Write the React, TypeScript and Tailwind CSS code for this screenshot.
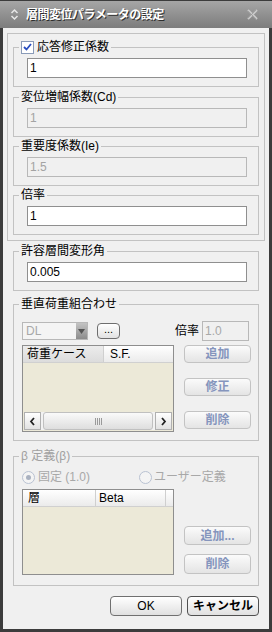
import React from "react";

function TextBox({ value, disabled }: { value: string; disabled?: boolean }) {
  return (
    <div
      className={
        disabled
          ? "mt-[10px] ml-[13px] h-[20px] w-[220px] border border-[#b8b8b8] bg-[#f0f0f0] pl-[2px] text-[12px] leading-[18px] text-[#a3a3a3]"
          : "mt-[10px] ml-[13px] h-[20px] w-[220px] border border-[#8f8f8f] bg-white pl-[2px] text-[12px] leading-[18px] text-black"
      }
    >
      {value}
    </div>
  );
}

function Group({
  label,
  className,
  children,
}: {
  label: React.ReactNode;
  className?: string;
  children?: React.ReactNode;
}) {
  return (
    <div className={"relative border border-[#c2c2c2] " + (className ?? "")}>
      <div className="absolute left-[5px] top-[-9px] flex items-center bg-[#f0f0f0] px-[2px] text-[12px] leading-[16px] text-black">
        {label}
      </div>
      {children}
    </div>
  );
}

function SideBtn({ children, className }: { children: React.ReactNode; className?: string }) {
  return (
    <div
      className={
        "flex w-[67px] items-center justify-center rounded-[4px] border border-[#c3c3c3] bg-gradient-to-b from-[#fbfbfb] to-[#e4e4e4] text-[12px] font-bold leading-none text-[#8595bd] " +
        (className ?? "")
      }
    >
      {children}
    </div>
  );
}

function Scrollbar() {
  return (
    <div className="mx-[1px] flex h-[18px] items-stretch bg-[#f2f2f2]">
      <div className="flex w-[17px] items-center justify-center border border-[#b0b0b0] bg-gradient-to-b from-white to-[#e2e2e2]">
        <svg width="7" height="9" viewBox="0 0 7 9">
          <path d="M5 1 L2 4.5 L5 8" stroke="#222" strokeWidth="1.8" fill="none" />
        </svg>
      </div>
      <div className="mx-[2px] flex flex-1 items-center justify-center rounded-[3px] border border-[#c0c0c0] bg-gradient-to-b from-[#fafafa] to-[#dedede]">
        <div className="flex gap-[1px]">
          <div className="h-[7px] w-[1px] bg-[#9a9a9a]" />
          <div className="h-[7px] w-[1px] bg-[#9a9a9a]" />
          <div className="h-[7px] w-[1px] bg-[#9a9a9a]" />
          <div className="h-[7px] w-[1px] bg-[#9a9a9a]" />
        </div>
      </div>
      <div className="flex w-[17px] items-center justify-center border border-[#b0b0b0] bg-gradient-to-b from-white to-[#e2e2e2]">
        <svg width="7" height="9" viewBox="0 0 7 9">
          <path d="M2 1 L5 4.5 L2 8" stroke="#222" strokeWidth="1.8" fill="none" />
        </svg>
      </div>
    </div>
  );
}

export default function App() {
  return (
    <div className="flex h-[632px] w-[272px] flex-col bg-[#3c3c3c] px-[3px] pb-[3px] font-['Liberation_Sans','Noto_Sans_CJK_JP',sans-serif]">
      {/* Title bar */}
      <div className="-mx-[3px] flex h-[28px] shrink-0 items-center border-t border-[#3c3c3c] bg-gradient-to-b from-[#a6a6a6] to-[#7c7c7c] px-[3px]">
        <svg width="9" height="13" viewBox="0 0 9 13" className="ml-[7px]">
          <path d="M1.5 5 L4.5 2 L7.5 5" stroke="#e8e8e8" strokeWidth="1.5" fill="none" />
          <path d="M1.5 8 L4.5 11 L7.5 8" stroke="#e8e8e8" strokeWidth="1.5" fill="none" />
        </svg>
        <span className="ml-[7px] text-[12px] font-bold leading-none tracking-[-0.5px] text-white [text-shadow:1px_1px_0_#2e2e2e]">
          層間変位パラメータの設定
        </span>
        <svg width="11" height="11" viewBox="0 0 11 11" className="ml-auto mr-[11px]">
          <path d="M1 1 L10 10 M10 1 L1 10" stroke="#c9c9c9" strokeWidth="2" />
          <path d="M1 2 L9 10 M9 1 L1 9" stroke="#9a9a9a" strokeWidth="0.8" />
        </svg>
      </div>

      {/* Body */}
      <div className="flex flex-1 flex-col bg-[#f0f0f0]">
        {/* Outer panel */}
        <div className="mx-[4px] mt-[5px] border border-[#c2c2c2] px-[5px] pb-[5px] pt-[13px]">
          <Group
            className="h-[40px]"
            label={
              <>
                <span className="mr-[3px] flex h-[13px] w-[13px] items-center justify-center border border-[#8a9bb8] bg-white">
                  <svg width="9" height="8" viewBox="0 0 9 8">
                    <path d="M1 4 L3.5 6.5 L8 1" stroke="#2a4ec0" strokeWidth="1.8" fill="none" />
                  </svg>
                </span>
                <span>応答修正係数</span>
              </>
            }
          >
            <TextBox value="1" />
          </Group>
          <Group className="mt-[10px] h-[40px]" label="変位増幅係数(Cd)">
            <TextBox value="1" disabled />
          </Group>
          <Group className="mt-[9px] h-[40px]" label="重要度係数(Ie)">
            <TextBox value="1.5" disabled />
          </Group>
          <Group className="mt-[9px] h-[40px]" label="倍率">
            <TextBox value="1" />
          </Group>
        </div>

        <div className="mx-[10px] flex flex-col">
          <Group className="mt-[10px] h-[40px]" label="許容層間変形角">
            <TextBox value="0.005" />
          </Group>

          {/* Vertical load combination */}
          <Group className="mt-[13px] h-[137px]" label="垂直荷重組合わせ">
            <div className="ml-[8px] mr-[9px] mt-[16px] flex h-[20px] items-center">
              <div className="flex h-[18px] w-[66px] border border-[#b8b8b8] bg-[#f4f4f4]">
                <span className="flex-1 pl-[3px] text-[12px] leading-[16px] text-[#a8a8a8]">DL</span>
                <div className="flex w-[11px] items-center justify-center bg-gradient-to-b from-[#c4c4c4] to-[#8c8c8c]">
                  <svg width="7" height="5" viewBox="0 0 7 5">
                    <path d="M0 0 L7 0 L3.5 5 Z" fill="#555" />
                  </svg>
                </div>
              </div>
              <div className="ml-[9px] flex h-[16px] w-[23px] items-center justify-center rounded-[4px] border border-[#6e6e6e] bg-gradient-to-b from-white to-[#e2e2e2] pb-[3px] text-[11px] leading-none text-black">
                ...
              </div>
              <span className="ml-auto text-[12px] leading-none text-black">倍率</span>
              <div className="ml-[3px] h-[20px] w-[47px] border border-[#b8b8b8] bg-[#f0f0f0] pl-[2px] text-[12px] leading-[18px] text-[#a8a8a8]">
                1.0
              </div>
            </div>
            <div className="ml-[8px] mt-[4px] flex">
              <div className="flex h-[87px] w-[152px] flex-col border border-[#8e8e8e] bg-[#ece9d8]">
                <div className="flex h-[17px] border-b border-[#d0d0d0] bg-gradient-to-b from-white to-[#ebebeb] text-[12px] leading-[16px] text-black">
                  <div className="w-[81px] border-r border-[#cfcfcf] bg-gradient-to-b from-[#ececec] to-[#dcdcdc] pl-[4px]">荷重ケース</div>
                  <div className="flex-1 pl-[6px]">S.F.</div>
                </div>
                <div className="flex-1" />
                <Scrollbar />
                <div className="h-[1px]" />
              </div>
              <div className="ml-[10px] flex flex-col">
                <SideBtn className="h-[18px]">追加</SideBtn>
                <SideBtn className="mt-[15px] h-[18px]">修正</SideBtn>
                <SideBtn className="mt-[15px] h-[18px]">削除</SideBtn>
              </div>
            </div>
          </Group>

          {/* Beta definition */}
          <Group
            className="mt-[15px] h-[130px]"
            label={<span className="text-[#a0a0a0]">β 定義(β)</span>}
          >
            <div className="ml-[8px] mt-[13px] flex h-[14px] items-center text-[12px] leading-none text-[#a8a8a8]">
              <span className="flex h-[13px] w-[13px] items-center justify-center rounded-full border border-[#b9c2d2] bg-[#f4f4f4]">
                <span className="h-[5px] w-[5px] rounded-full bg-[#a9b1c0]" />
              </span>
              <span className="ml-[3px] w-[101px]">固定 (1.0)</span>
              <span className="flex h-[13px] w-[13px] items-center justify-center rounded-full border border-[#b9c2d2] bg-[#f4f4f4]" />
              <span className="ml-[2px]">ユーザー定義</span>
            </div>
            <div className="ml-[8px] mt-[5px] flex">
              <div className="flex h-[86px] w-[152px] flex-col border border-[#8e8e8e] bg-[#ece9d8]">
                <div className="flex h-[17px] border-b border-[#d0d0d0] bg-gradient-to-b from-white to-[#ebebeb] text-[12px] leading-[16px] text-black">
                  <div className="w-[73px] border-r border-[#cfcfcf] pl-[5px]">層</div>
                  <div className="w-[70px] border-r border-[#cfcfcf] pl-[3px]">Beta</div>
                  <div className="flex-1" />
                </div>
              </div>
              <div className="ml-[10px] flex flex-col">
                <SideBtn className="mt-[37px] h-[19px]">追加...</SideBtn>
                <SideBtn className="mt-[9px] h-[20px]">削除</SideBtn>
              </div>
            </div>
          </Group>

          {/* Bottom buttons */}
          <div className="mt-[10px] flex justify-end gap-[5px]">
            <div className="flex h-[20px] w-[72px] items-center justify-center rounded-[4px] border border-[#707070] bg-gradient-to-b from-white to-[#e0e0e0] text-[12px] leading-none text-black">
              OK
            </div>
            <div className="flex h-[20px] w-[72px] items-center justify-center rounded-[4px] border border-[#505050] bg-gradient-to-b from-white to-[#e0e0e0] text-[12px] font-bold leading-none text-black">
              キャンセル
            </div>
          </div>
        </div>
      </div>
    </div>
  );
}
